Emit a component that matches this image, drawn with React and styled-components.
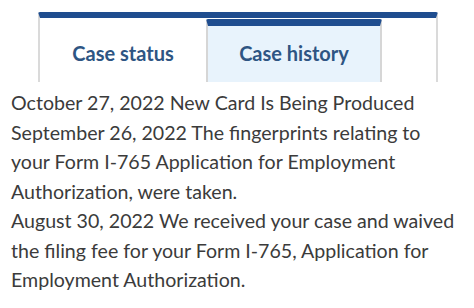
import React from "react";
import styled, { createGlobalStyle } from "styled-components";

const GlobalStyle = createGlobalStyle`
  body {
    margin: 0;
    background: #ffffff;
    font-family: "Lato", "Noto Sans", sans-serif;
  }
`;

const Page = styled.div`
  width: 474px;
  height: 308px;
  padding: 12px 0 0 0;
  box-sizing: border-box;
  overflow: hidden;
`;

const TabBar = styled.div`
  display: flex;
  margin-left: 38px;
  width: 400px;
  height: 70px;
  box-sizing: border-box;
  border-top: 6px solid #1f4d8f;
  border-left: 2px solid #dadada;
  border-right: 2px solid #dadada;
  border-radius: 2px 2px 0 0;
`;

const Tab = styled.div`
  display: flex;
  align-items: center;
  justify-content: center;
  width: ${(p) => p.$width}px;
  box-sizing: border-box;
  margin-top: ${(p) => (p.$active ? "1px" : "0")};
  font-size: 20px;
  font-weight: 700;
  color: #2e5583;
  background: ${(p) => (p.$active ? "#e8f3fc" : "#ffffff")};
  border-top: 7px solid ${(p) => (p.$active ? "#1f4d8f" : "transparent")};
  border-left: 2px solid ${(p) => (p.$active ? "#d6d6d6" : "transparent")};
  border-right: 2px solid ${(p) => (p.$active ? "#d6d6d6" : "transparent")};
  border-radius: 2px 2px 0 0;
  padding-bottom: 2px;
`;

const History = styled.div`
  padding: 0 0 0 11px;
  margin-top: 6px;
  font-size: 19.6px;
  line-height: 29.5px;
  color: #3b3b3b;
  white-space: nowrap;
`;

const Entry = styled.p`
  margin: 0;
`;

const entries = [
  ["October 27, 2022 New Card Is Being Produced"],
  [
    "September 26, 2022 The fingerprints relating to",
    "your Form I-765 Application for Employment",
    "Authorization, were taken.",
  ],
  [
    "August 30, 2022 We received your case and waived",
    "the filing fee for your Form I-765, Application for",
    "Employment Authorization.",
  ],
];

export default function App() {
  return (
    <Page>
      <GlobalStyle />
      <TabBar>
        <Tab $width={166}>Case status</Tab>
        <Tab $width={176} $active>
          Case history
        </Tab>
      </TabBar>
      <History>
        {entries.map((lines, i) => (
          <Entry key={i}>
            {lines.map((line, j) => (
              <React.Fragment key={j}>
                {j > 0 && <br />}
                {line}
              </React.Fragment>
            ))}
          </Entry>
        ))}
      </History>
    </Page>
  );
}
